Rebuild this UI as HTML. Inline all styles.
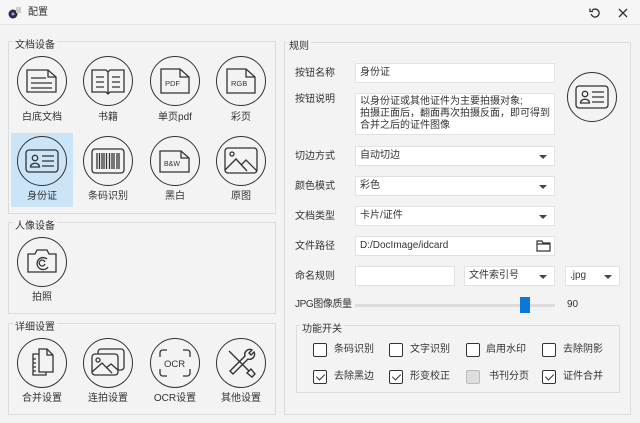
<!DOCTYPE html>
<html><head><meta charset="utf-8"><style>
*{margin:0;padding:0;box-sizing:border-box}
body{width:640px;height:423px;background:#f3f3f3;font-family:"Liberation Sans","Noto Sans CJK SC",sans-serif;font-size:10px;line-height:14px;color:#333;position:relative;overflow:hidden}
.a{position:absolute}
.gb{position:absolute;border:1px solid #dcdcdc}
.gt{position:absolute;background:#f3f3f3;padding:0 2px;font-size:10px}
.c{position:absolute;width:50px;height:50px;border:1.5px solid #333;border-radius:50%}
.c svg{position:absolute;left:0;top:0}
.lb{position:absolute;width:66px;text-align:center;font-size:10px}
.in{position:absolute;background:#fff;border:1px solid #e2e2e2;padding:2px 4px;font-size:10px;height:20px;line-height:14px}
.sel:after{content:"";position:absolute;right:7px;top:8px;border-left:4px solid transparent;border-right:4px solid transparent;border-top:4px solid #444}
.cb{position:absolute;width:14px;height:14px;border:1.3px solid #333;border-radius:2px;background:#fff}
.ck:after{content:"";position:absolute;left:3.5px;top:1px;width:4px;height:7px;border:solid #333;border-width:0 1.3px 1.3px 0;transform:rotate(45deg)}
</style></head><body>
<div class="a" style="left:0;top:0;width:640px;height:25px;background:#f6f6f6;border-bottom:1px solid #e4e4e4"></div>
<svg class="a" style="left:7px;top:5px" width="16" height="14"><circle cx="6" cy="9" r="4.5" fill="#2a2a5a"/><circle cx="6" cy="9" r="1.5" fill="#aab"/><rect x="9" y="2" width="5" height="6" fill="#ccc"/></svg>
<div class="a" style="left:28px;top:6px">配置</div>
<svg class="a" style="left:589px;top:7px" width="12" height="12" fill="none" stroke="#333" stroke-width="1.3"><path d="M3 3.5A4 4 0 1 1 2.2 7"/><path d="M1 1.5v3h3"/></svg>
<svg class="a" style="left:618px;top:8px" width="10" height="10" stroke="#333" stroke-width="1.3"><path d="M1 1L9 9M9 1L1 9"/></svg>

<div class="gb" style="left:8px;top:41px;width:268px;height:173px"></div><div class="gt" style="left:13px;top:39px">文档设备</div>
<div class="a" style="left:11px;top:133px;width:62px;height:74px;background:#cce4f7"></div>
<div class="c" style="left:17px;top:56px"><svg width="48" height="48" fill="none" stroke="#333" stroke-width="1.3"><path d="M9 13h21l8 7v15H9z"/><path d="M30 13v7h8"/><path d="M13 21h15M13 26h21M13 31h21"/></svg></div>
<div class="c" style="left:83px;top:56px"><svg width="48" height="48" fill="none" stroke="#333" stroke-width="1.3"><path d="M8 13h14l2 2 2-2h14v22H26l-2 2-2-2H8z"/><path d="M24 15v21M12 20h8M12 25h8M12 30h8M28 20h8M28 25h8M28 30h8"/></svg></div>
<div class="c" style="left:150px;top:56px"><svg width="48" height="48" fill="none" stroke="#333" stroke-width="1.3"><path d="M10 12h19l9 8v16H10z"/><path d="M29 12v8h9"/><text x="14" y="29" font-size="7.5" fill="#333" stroke="none" font-family="Liberation Sans">PDF</text></svg></div>
<div class="c" style="left:216px;top:56px"><svg width="48" height="48" fill="none" stroke="#333" stroke-width="1.3"><path d="M10 12h19l9 8v16H10z"/><path d="M29 12v8h9"/><text x="14" y="29" font-size="7.5" fill="#333" stroke="none" font-family="Liberation Sans">RGB</text></svg></div>
<div class="lb" style="left:9px;top:111px">白底文档</div><div class="lb" style="left:75px;top:111px">书籍</div><div class="lb" style="left:142px;top:111px">单页pdf</div><div class="lb" style="left:208px;top:111px">彩页</div>
<div class="c" style="left:17px;top:136px"><svg width="48" height="48" fill="none" stroke="#333" stroke-width="1.3"><rect x="8" y="13" width="32" height="22" rx="3"/><circle cx="17" cy="21" r="2.7"/><path d="M12.5 30c0-5 9-5 9 0zM24 19h12M24 24h12M24 29h12"/></svg></div>
<div class="c" style="left:83px;top:136px"><svg width="48" height="48" fill="none" stroke="#333" stroke-width="1.3"><rect x="8" y="12" width="32" height="24" rx="3"/><path d="M13 16v16M15.5 16v16M18 16v16M20 16v16M22.5 16v16M25.5 16v16M28 16v16M30 16v16M33 16v16M35 16v16" stroke-width="1.3"/></svg></div>
<div class="c" style="left:150px;top:136px"><svg width="48" height="48" fill="none" stroke="#333" stroke-width="1.3"><path d="M9 14h21l8 7v14H9z"/><path d="M30 14v7h8"/><text x="13" y="29" font-size="7" fill="#333" stroke="none" font-family="Liberation Sans">B&amp;W</text></svg></div>
<div class="c" style="left:216px;top:136px"><svg width="48" height="48" fill="none" stroke="#333" stroke-width="1.3"><rect x="8" y="11" width="32" height="25" rx="3"/><circle cx="15" cy="17" r="2"/><path d="M8 33l11-11 11 12M24 28l5-5 11 11"/></svg></div>
<div class="lb" style="left:9px;top:190px">身份证</div><div class="lb" style="left:75px;top:190px">条码识别</div><div class="lb" style="left:142px;top:190px">黑白</div><div class="lb" style="left:208px;top:190px">原图</div>

<div class="gb" style="left:8px;top:222px;width:268px;height:92px"></div><div class="gt" style="left:13px;top:220px">人像设备</div>
<div class="c" style="left:17px;top:237px"><svg width="48" height="48" fill="none" stroke="#333" stroke-width="1.3"><path d="M10 16h7l2-4h10l2 4h7v18H10z"/><path d="M29 21a6 6 0 1 0 1 8"/><path d="M27 24a3 3 0 1 0 0 2"/></svg></div>
<div class="lb" style="left:9px;top:291px">拍照</div>

<div class="gb" style="left:8px;top:323px;width:268px;height:92px"></div><div class="gt" style="left:13px;top:321px">详细设置</div>
<div class="c" style="left:17px;top:338px"><svg width="48" height="48" fill="none" stroke="#333" stroke-width="1.3"><path d="M21 10h8l6 6v17H21z"/><path d="M29 10v6h6"/><path d="M21 15h-6v21h13v-3"/><path d="M15 20h3M15 24h3M15 28h3M15 32h3"/></svg></div>
<div class="c" style="left:83px;top:338px"><svg width="48" height="48" fill="none" stroke="#333" stroke-width="1.3"><rect x="14" y="10" width="26" height="21" rx="3"/><rect x="8" y="15" width="26" height="21" rx="3" fill="#f3f3f3"/><circle cx="14" cy="21" r="2"/><path d="M8 33l10-9 10 10M22 29l5-4 7 6"/></svg></div>
<div class="c" style="left:150px;top:338px"><svg width="48" height="48" fill="none" stroke="#333" stroke-width="1.3"><path d="M9 18v-4q0-3 3-3h4M32 11h4q3 0 3 3v4M39 30v4q0 3-3 3h-4M16 37h-4q-3 0-3-3v-4"/><text x="13" y="28" font-size="9.5" fill="#333" stroke="none" font-family="Liberation Sans">OCR</text></svg></div>
<div class="c" style="left:216px;top:338px"><svg width="48" height="48" fill="none" stroke="#333" stroke-width="1.4"><path d="M12 12l6 6M18 18l14 14M32 32l-2 2 5 4 3-3-4-5z"/><path d="M35 11a5 5 0 0 0-7 6L13 32l3 3 15-15a5 5 0 0 0 6-7l-3 3-2-2z"/></svg></div>
<div class="lb" style="left:9px;top:392px">合并设置</div><div class="lb" style="left:75px;top:392px">连拍设置</div><div class="lb" style="left:142px;top:392px">OCR设置</div><div class="lb" style="left:208px;top:392px">其他设置</div>

<div class="gb" style="left:284px;top:42px;width:347px;height:373px"></div><div class="gt" style="left:287px;top:40px">规则</div>
<div class="a" style="left:295px;top:67px">按钮名称</div><div class="in" style="left:355px;top:63px;width:200px">身份证</div>
<div class="a" style="left:295px;top:93px">按钮说明</div><div class="in" style="left:355px;top:93px;width:200px;height:42px;padding-top:2px;line-height:12px">以身份证或其他证件为主要拍摄对象;<br>拍摄正面后，翻面再次拍摄反面，即可得到合并之后的证件图像</div>
<div class="c" style="left:567px;top:72px"><svg width="48" height="48" fill="none" stroke="#333" stroke-width="1.3"><rect x="8" y="13" width="32" height="22" rx="3"/><circle cx="17" cy="21" r="2.7"/><path d="M12.5 30c0-5 9-5 9 0zM24 19h12M24 24h12M24 29h12"/></svg></div>
<div class="a" style="left:295px;top:150px">切边方式</div><div class="in sel" style="left:355px;top:146px;width:200px">自动切边</div>
<div class="a" style="left:295px;top:180px">颜色模式</div><div class="in sel" style="left:355px;top:176px;width:200px">彩色</div>
<div class="a" style="left:295px;top:210px">文档类型</div><div class="in sel" style="left:355px;top:206px;width:200px">卡片/证件</div>
<div class="a" style="left:295px;top:240px">文件路径</div><div class="in" style="left:355px;top:236px;width:200px">D:/DocImage/idcard</div>
<svg class="a" style="left:536px;top:239px" width="16" height="13" fill="none" stroke="#333" stroke-width="1.2"><path d="M1 2h5l1 2h7v8H1zM1 5h13"/></svg>
<div class="a" style="left:295px;top:270px">命名规则</div><div class="in" style="left:355px;top:266px;width:100px"></div>
<div class="in sel" style="left:464px;top:266px;width:91px">文件索引号</div>
<div class="in sel" style="left:565px;top:266px;width:55px">.jpg</div>
<div class="a" style="left:295px;top:298px;letter-spacing:-0.4px">JPG图像质量</div>
<div class="a" style="left:355px;top:304px;width:200px;height:3px;background:#ddd"></div>
<div class="a" style="left:520px;top:297px;width:10px;height:16px;background:#0a78d7"></div>
<div class="a" style="left:567px;top:298px">90</div>
<div class="gb" style="left:296px;top:325px;width:324px;height:68px"></div><div class="gt" style="left:300px;top:323px">功能开关</div>
<div class="cb" style="left:313px;top:343px"></div><div class="a" style="left:334px;top:343px">条码识别</div>
<div class="cb" style="left:389px;top:343px"></div><div class="a" style="left:410px;top:343px">文字识别</div>
<div class="cb" style="left:466px;top:343px"></div><div class="a" style="left:486px;top:343px">启用水印</div>
<div class="cb" style="left:542px;top:343px"></div><div class="a" style="left:563px;top:343px">去除阴影</div>
<div class="cb ck" style="left:313px;top:370px"></div><div class="a" style="left:334px;top:370px">去除黑边</div>
<div class="cb ck" style="left:389px;top:370px"></div><div class="a" style="left:410px;top:370px">形变校正</div>
<div class="cb" style="left:466px;top:370px;background:#ddd;border-color:#bbb"></div><div class="a" style="left:489px;top:370px">书刊分页</div>
<div class="cb ck" style="left:542px;top:370px"></div><div class="a" style="left:563px;top:370px">证件合并</div>
</body></html>
